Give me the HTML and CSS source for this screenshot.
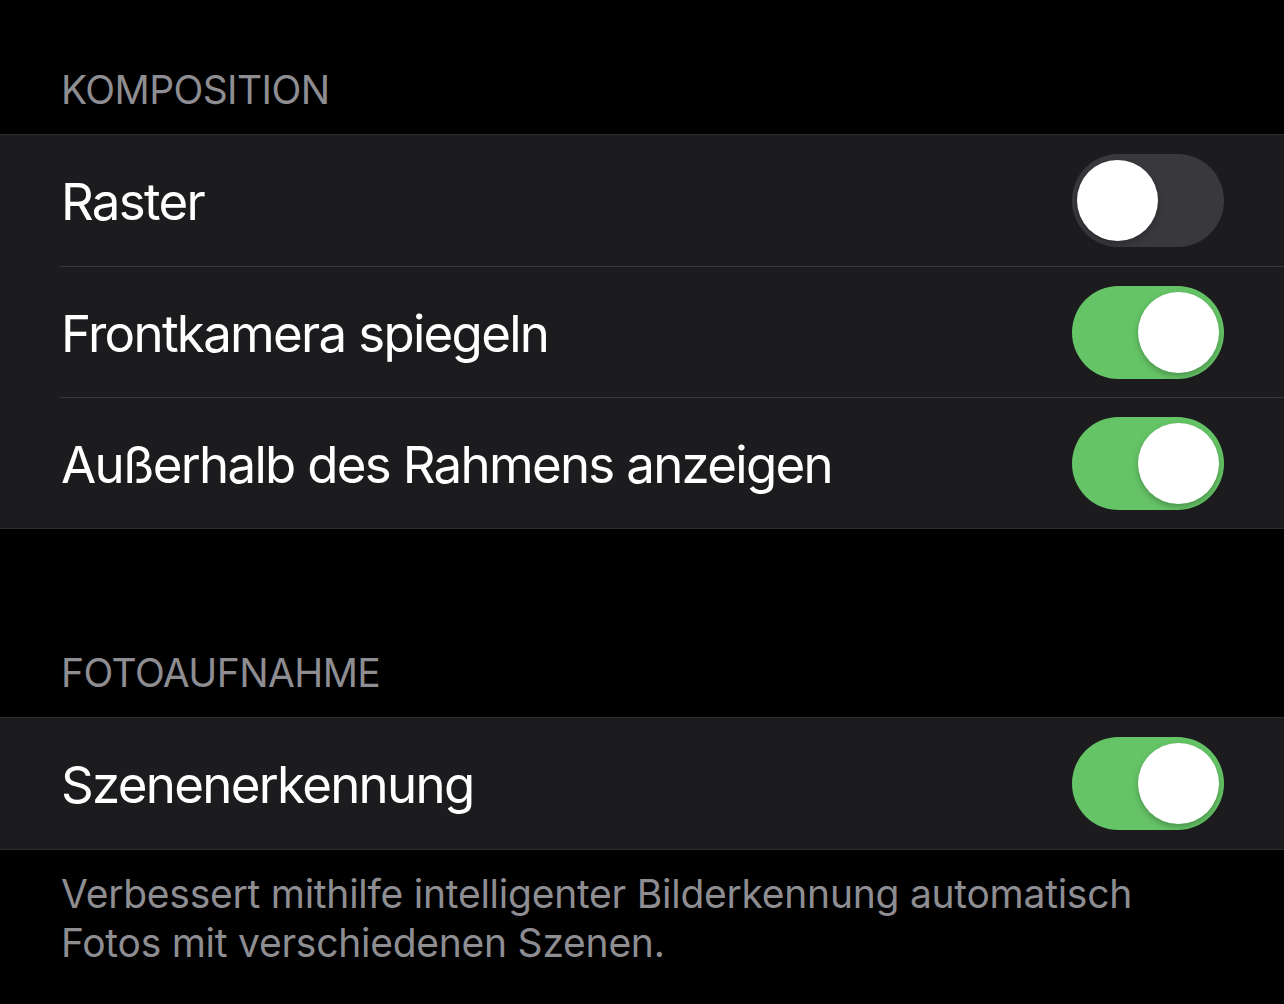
FILE: index.html
```html
<!DOCTYPE html>
<html lang="de">
<head>
<meta charset="utf-8">
<title>Kamera</title>
<link rel="stylesheet" href="styles.css">
</head>
<body>
<section class="section first">
  <h2 class="section-header">KOMPOSITION</h2>
  <div class="group">
    <div class="row">
      <span class="label">Raster</span>
      <span class="switch"><span class="knob"></span></span>
    </div>
    <div class="row">
      <span class="label">Frontkamera spiegeln</span>
      <span class="switch on"><span class="knob"></span></span>
    </div>
    <div class="row">
      <span class="label">Außerhalb des Rahmens anzeigen</span>
      <span class="switch on"><span class="knob"></span></span>
    </div>
  </div>
</section>
<section class="section second">
  <h2 class="section-header">FOTOAUFNAHME</h2>
  <div class="group">
    <div class="row">
      <span class="label">Szenenerkennung</span>
      <span class="switch on"><span class="knob"></span></span>
    </div>
  </div>
  <p class="footer">Verbessert mithilfe intelligenter Bilderkennung automatisch<br>Fotos mit verschiedenen Szenen.</p>
</section>
</body>
</html>
```

FILE: styles.css
```css
html, body {
  margin: 0;
  padding: 0;
  background: #000;
}
body {
  font-family: "Inter", "Liberation Sans", sans-serif;
  color: #fff;
  width: 1284px;
  height: 1004px;
  overflow: hidden;
}
.section.first {
  padding-top: 66px;
}
.section.second {
  margin-top: 120px;
}
.section-header {
  margin: 0;
  padding: 0 60px 20px 61px;
  font-size: 39px;
  line-height: 48px;
  font-weight: 400;
  color: #8d8d92;
  letter-spacing: -0.6px;
}
.group {
  background: #1c1c1e;
  border-top: 1px solid #2e2e30;
  border-bottom: 1px solid #2e2e30;
}
.row {
  box-sizing: border-box;
  display: flex;
  align-items: center;
  justify-content: space-between;
  height: 131px;
  margin-left: 60px;
  padding-right: 60px;
  border-top: 1px solid #38383a;
}
.row:first-child {
  border-top: none;
}
.label {
  font-size: 51px;
  line-height: 62px;
  padding-left: 1px;
  padding-top: 3px;
  color: #fff;
  letter-spacing: -1.7px;
}
.switch {
  position: relative;
  display: block;
  width: 152px;
  height: 93px;
  border-radius: 47px;
  background: #39393d;
  flex-shrink: 0;
}
.switch.on {
  background: #65c466;
}
.knob {
  position: absolute;
  top: 6px;
  left: 5px;
  width: 81px;
  height: 81px;
  border-radius: 50%;
  background: #fff;
  box-shadow: 0 3px 6px rgba(0, 0, 0, 0.25);
}
.switch.on .knob {
  left: 66px;
}
.footer {
  margin: 0;
  padding: 19px 60px 0 61px;
  font-size: 39px;
  line-height: 49px;
  color: #8d8d92;
  letter-spacing: -0.25px;
}
```
